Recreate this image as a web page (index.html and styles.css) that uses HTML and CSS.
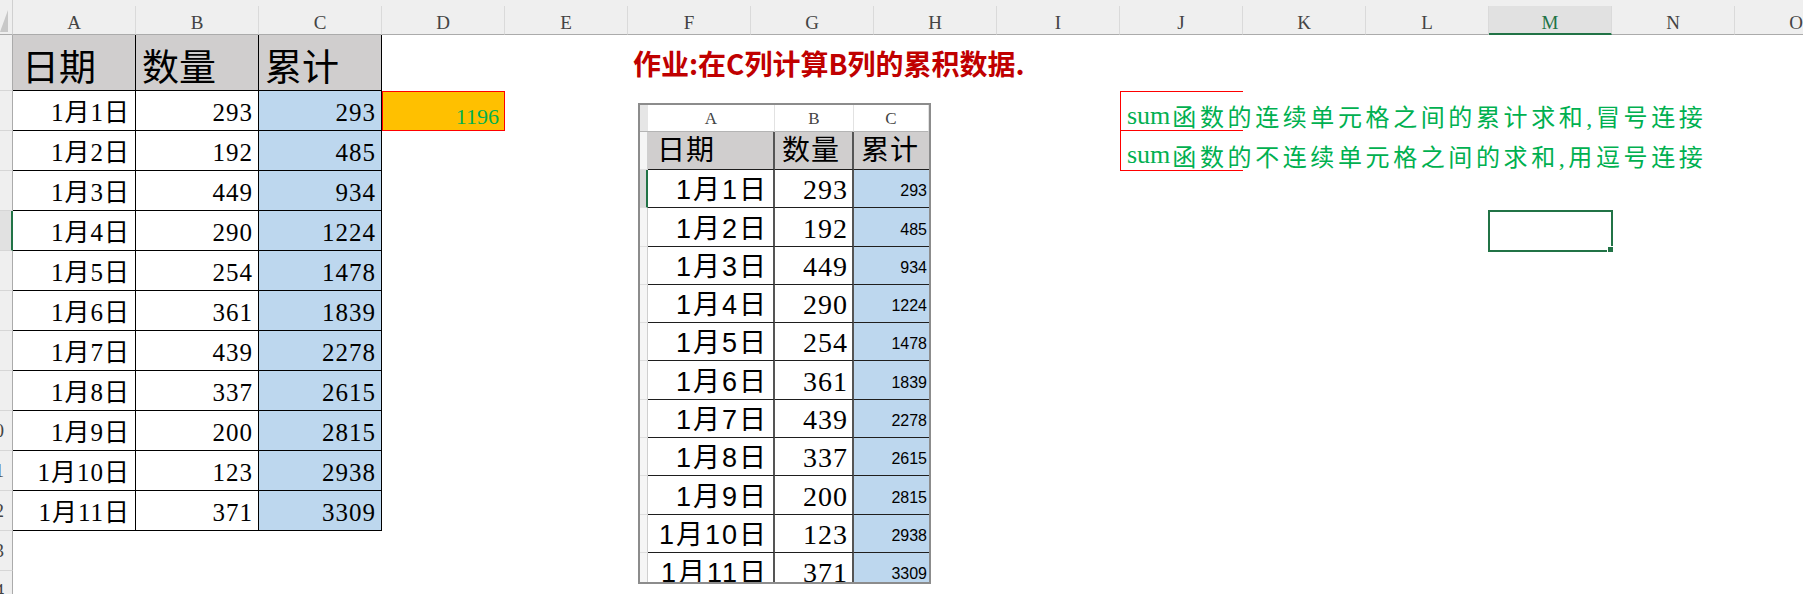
FILE: index.html
```html
<!DOCTYPE html>
<html lang="zh-CN">
<head>
  <meta charset="UTF-8">
  <title>累计求和</title>
  <link rel="stylesheet" href="styles.css">
</head>
<body>
  <div class="sheet">
    <div class="col-heads">
      <div class="corner"></div>
      <div class="col-head">A</div>
      <div class="col-head">B</div>
      <div class="col-head">C</div>
      <div class="col-head">D</div>
      <div class="col-head">E</div>
      <div class="col-head">F</div>
      <div class="col-head">G</div>
      <div class="col-head">H</div>
      <div class="col-head">I</div>
      <div class="col-head">J</div>
      <div class="col-head">K</div>
      <div class="col-head">L</div>
      <div class="col-head active">M</div>
      <div class="col-head">N</div>
      <div class="col-head">O</div>
    </div>

    <div class="sheet-body">
      <div class="row-heads">
        <div class="row-head tall"></div>
        <div class="row-head"></div>
        <div class="row-head"></div>
        <div class="row-head"></div>
        <div class="row-head active"></div>
        <div class="row-head"></div>
        <div class="row-head"></div>
        <div class="row-head"></div>
        <div class="row-head"></div>
        <div class="row-head"><span>10</span></div>
        <div class="row-head"><span>11</span></div>
        <div class="row-head"><span>12</span></div>
        <div class="row-head"><span>13</span></div>
        <div class="row-head"><span>14</span></div>
      </div>

      <div class="grid">
        <!-- A1:C12 data -->
        <div class="sum-table">
          <div class="th first">日期</div>
          <div class="th">数量</div>
          <div class="th">累计</div>

          <div class="td">1月1日</div><div class="td">293</div><div class="td total">293</div>
          <div class="td">1月2日</div><div class="td">192</div><div class="td total">485</div>
          <div class="td">1月3日</div><div class="td">449</div><div class="td total">934</div>
          <div class="td">1月4日</div><div class="td">290</div><div class="td total">1224</div>
          <div class="td">1月5日</div><div class="td">254</div><div class="td total">1478</div>
          <div class="td">1月6日</div><div class="td">361</div><div class="td total">1839</div>
          <div class="td">1月7日</div><div class="td">439</div><div class="td total">2278</div>
          <div class="td">1月8日</div><div class="td">337</div><div class="td total">2615</div>
          <div class="td">1月9日</div><div class="td">200</div><div class="td total">2815</div>
          <div class="td">1月10日</div><div class="td">123</div><div class="td total">2938</div>
          <div class="td">1月11日</div><div class="td">371</div><div class="td total">3309</div>
        </div>

        <div class="result">1196</div>
        <div class="title">作业:在C列计算B列的累积数据.</div>
        <div class="note note-1"><span class="latin">sum</span>函数的连续单元格之间的累计求和,冒号连接</div>
        <div class="note note-2"><span class="latin">sum</span>函数的不连续单元格之间的求和,用逗号连接</div>
        <div class="selected"></div>

        <!-- pasted picture of the task sheet -->
        <div class="picture">
          <div class="pic-corner"></div>
          <div class="pic-col">A</div>
          <div class="pic-col">B</div>
          <div class="pic-col">C</div>

          <div class="pic-row"></div>
          <div class="pic-cell pic-th a">日期</div>
          <div class="pic-cell pic-th b">数量</div>
          <div class="pic-cell pic-th c">累计</div>

          <div class="pic-row active"></div><div class="pic-cell a pic-date">1月1日</div><div class="pic-cell b pic-num">293</div><div class="pic-cell pic-total">293</div>
          <div class="pic-row"></div><div class="pic-cell a pic-date">1月2日</div><div class="pic-cell b pic-num">192</div><div class="pic-cell pic-total">485</div>
          <div class="pic-row"></div><div class="pic-cell a pic-date">1月3日</div><div class="pic-cell b pic-num">449</div><div class="pic-cell pic-total">934</div>
          <div class="pic-row"></div><div class="pic-cell a pic-date">1月4日</div><div class="pic-cell b pic-num">290</div><div class="pic-cell pic-total">1224</div>
          <div class="pic-row"></div><div class="pic-cell a pic-date">1月5日</div><div class="pic-cell b pic-num">254</div><div class="pic-cell pic-total">1478</div>
          <div class="pic-row"></div><div class="pic-cell a pic-date">1月6日</div><div class="pic-cell b pic-num">361</div><div class="pic-cell pic-total">1839</div>
          <div class="pic-row"></div><div class="pic-cell a pic-date">1月7日</div><div class="pic-cell b pic-num">439</div><div class="pic-cell pic-total">2278</div>
          <div class="pic-row"></div><div class="pic-cell a pic-date">1月8日</div><div class="pic-cell b pic-num">337</div><div class="pic-cell pic-total">2615</div>
          <div class="pic-row"></div><div class="pic-cell a pic-date">1月9日</div><div class="pic-cell b pic-num">200</div><div class="pic-cell pic-total">2815</div>
          <div class="pic-row"></div><div class="pic-cell a pic-date">1月10日</div><div class="pic-cell b pic-num">123</div><div class="pic-cell pic-total">2938</div>
          <div class="pic-row"></div><div class="pic-cell a pic-date">1月11日</div><div class="pic-cell b pic-num">371</div><div class="pic-cell pic-total">3309</div>
        </div>
      </div>
    </div>
  </div>
</body>
</html>
```

FILE: styles.css
```css
* {
  box-sizing: border-box;
}
body {
  margin: 0;
  width: 1803px;
  height: 594px;
  overflow: hidden;
  background: #fff;
  color: #000;
  font-family: "Liberation Serif", "Noto Sans CJK SC", serif;
}

/* column letters */
.col-heads {
  display: flex;
  height: 35px;
  padding-top: 6px;
  background: #efefef;
}
.corner {
  flex: 0 0 13px;
  height: 35px;
  margin-top: -6px;
  border-bottom: 1px solid #ababab;
  border-right: 1px solid #d0d0d0;
  position: relative;
}
.corner::after {
  content: "";
  position: absolute;
  left: 0;
  top: 10px;
  border-left: 8px solid transparent;
  border-bottom: 22px solid #c8c8c8;
}
.col-head {
  flex: 0 0 123px;
  height: 29px;
  padding-top: 6px;
  border-right: 1px solid #dadada;
  border-bottom: 1px solid #ababab;
  text-align: center;
  font-size: 19px;
  line-height: 22px;
  color: #444;
}
.col-head.active {
  background: #e1e1e1;
  color: #217346;
  border-bottom: 2px solid #217346;
}

/* row numbers + cells */
.sheet-body {
  display: flex;
}
.row-heads {
  flex: 0 0 13px;
  width: 13px;
  min-width: 0;
  overflow: hidden;
  background: #efefef;
}
.row-head {
  width: 13px;
  height: 40px;
  border-right: 1px solid #ababab;
  border-bottom: 1px solid #d6d6d6;
  display: flex;
  justify-content: flex-end;
  align-items: center;
  overflow: hidden;
  font-size: 19px;
  color: #444;
}
.row-head span {
  flex: none;
  margin-right: 8px;
}
.row-head.tall {
  height: 56px;
}
.row-head.active {
  background: #e1e1e1;
  border-right: 2px solid #217346;
}
.grid {
  flex: none;
  position: relative;
  display: grid;
  grid-template-columns: repeat(15, 123px);
  grid-template-rows: 56px repeat(13, 40px);
}

/* main table */
.sum-table {
  grid-column: 1 / 4;
  grid-row: 1 / 13;
  display: grid;
  grid-template-columns: repeat(3, 123px);
  grid-template-rows: 56px repeat(11, 40px);
}
.sum-table div {
  display: flex;
  border-right: 1px solid #000;
  border-bottom: 1px solid #000;
  line-height: 1;
}
.sum-table .th {
  background: #d0cece;
  font-size: 37px;
  align-items: flex-end;
  padding: 0 0 3px 6px;
}
.sum-table .th.first {
  padding-left: 9px;
}
.sum-table .td {
  font-size: 25px;
  letter-spacing: 1px;
  align-items: center;
  justify-content: flex-end;
  padding: 4px 5px 0 0;
}
.sum-table .total {
  background: #bdd7ee;
}

.result {
  grid-column: 4;
  grid-row: 2;
  display: flex;
  align-items: flex-end;
  justify-content: flex-end;
  padding: 0 5px 2px 0;
  background: #ffc000;
  border: 1px solid #ff0000;
  color: #00b050;
  font-size: 22px;
  line-height: 1;
}
.title {
  grid-column: 6;
  grid-row: 1;
  display: flex;
  align-items: center;
  padding-left: 5px;
  white-space: nowrap;
  font-family: "Noto Sans CJK SC", sans-serif;
  font-weight: 700;
  font-size: 28px;
  color: #c00000;
}
.note {
  grid-column: 10;
  display: flex;
  align-items: center;
  padding: 9px 0 0 6px;
  white-space: nowrap;
  border-left: 1px solid #ff0000;
  border-bottom: 1px solid #ff0000;
  color: #00b050;
  font-size: 24px;
  letter-spacing: 3.6px;
}
.note .latin {
  font-size: 26px;
  letter-spacing: 0;
  margin-right: 2px;
}
.note-1 {
  grid-row: 2;
  border-top: 1px solid #ff0000;
}
.note-2 {
  grid-row: 3;
}
.selected {
  grid-column: 13;
  grid-row: 5;
  margin: -1px;
  border: 2px solid #217346;
  position: relative;
}
.selected::after {
  content: "";
  box-sizing: border-box;
  position: absolute;
  right: -3px;
  bottom: -3px;
  width: 7px;
  height: 7px;
  background: #217346;
  border: 1px solid #fff;
}

/* pasted picture */
.picture {
  position: absolute;
  left: 625px;
  top: 68px;
  width: 293px;
  height: 481px;
  overflow: hidden;
  background: #fff;
  border: 2px solid #8c8c8c;
  display: grid;
  grid-template-columns: 8px 127px 79px 75px;
  grid-template-rows: 27px 38px repeat(11, 38.3px);
}
.pic-corner {
  background: #e6e6e6;
  border-bottom: 1px solid #b4b4b4;
}
.pic-col {
  padding-top: 2px;
  border-right: 1px solid #e2e2e2;
  border-bottom: 1px solid #b4b4b4;
  text-align: center;
  font-size: 17px;
  line-height: 24px;
  color: #444;
}
.pic-row {
  background: #f5f5f5;
  border-right: 1px solid #cfcfcf;
  border-bottom: 1px solid #dedede;
}
.pic-row.active {
  background: #dadada;
  border-right: 2px solid #217346;
}
.pic-cell {
  display: flex;
  justify-content: flex-end;
  align-items: flex-end;
  border-bottom: 1px solid #1e1e1e;
  line-height: 1;
}
.pic-cell.a,
.pic-cell.b {
  border-right: 2px solid #555;
}
.pic-th {
  justify-content: flex-start;
  background: #d0cece;
  font-size: 28px;
  letter-spacing: 1px;
  padding: 0 0 4px 7px;
}
.pic-th.a {
  padding-left: 9px;
}
.pic-date {
  font-family: "Liberation Sans", "Noto Sans CJK SC", sans-serif;
  font-size: 27px;
  letter-spacing: 2px;
  padding: 0 5px 3px 0;
}
.pic-num {
  font-size: 28px;
  letter-spacing: 1px;
  padding: 0 4px 3px 0;
}
.pic-total {
  background: #bdd7ee;
  font-family: "Liberation Sans", sans-serif;
  font-size: 16px;
  padding: 0 2px 8px 0;
}
```
